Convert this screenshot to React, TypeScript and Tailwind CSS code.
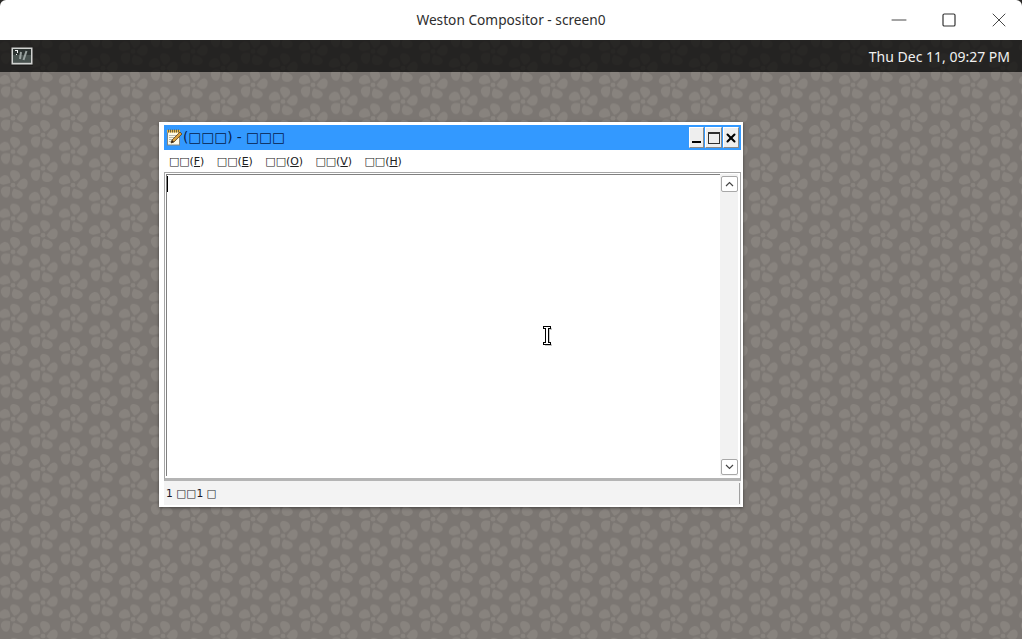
import { Minus, Square, X } from 'lucide-react'

// Weston's wallpaper tile: two staggered flowers
function Flower({ x, y }: { x: number; y: number }) {
  const angles = [0, 72, 144, 216, 288]
  return (
    <g transform={`translate(${x} ${y})`}>
      {angles.map((a) => (
        <path
          key={a}
          transform={`rotate(${a + 18})`}
          d="M0 -3.5 C-1 -5 -6.5 -7 -6.5 -11.5 C-6 -15 -1 -15.5 2 -13.5 C5.5 -11 4.5 -6.5 0 -3.5 Z"
        />
      ))}
      <circle r="2.4" />
    </g>
  )
}

function Wallpaper() {
  return (
    <svg className="absolute inset-0 w-full h-full" aria-hidden>
      <defs>
        <pattern id="tile" width="60" height="33.4" patternUnits="userSpaceOnUse" x="13" y="3.5">
          <g fill="#88837e">
            <Flower x={0} y={8} />
            <Flower x={60} y={8} />
            <Flower x={0} y={41.4} />
            <Flower x={60} y={41.4} />
            <Flower x={30} y={24.7} />
            <Flower x={30} y={-8.7} />
          </g>
        </pattern>
      </defs>
      <rect width="100%" height="100%" fill="#7b7672" />
      <rect width="100%" height="100%" fill="url(#tile)" />
    </svg>
  )
}

function TerminalIcon() {
  return (
    <svg width="22" height="19" viewBox="0 0 22 19" aria-hidden>
      <rect x="0.5" y="0.5" width="21" height="17" fill="#d0d2d0" />
      <rect x="2" y="2" width="18" height="13.5" fill="#2c3331" />
      <rect x="2" y="8" width="18" height="7.5" fill="#47514e" />
      <path d="M4 3 h3 v1 h-3 z M6 4 h1 v2 h-1 z M5 7 h1 v1 h-1 z" fill="#f0f0f0" />
      <path d="M9 12 L10 5 M12.5 13 L15.5 4" stroke="#9aa3a0" strokeWidth="2" />
      <rect x="0" y="18" width="22" height="1" fill="#1c1b1a" />
    </svg>
  )
}

function NotepadIcon() {
  return (
    <svg width="17" height="17" viewBox="0 0 17 17" aria-hidden>
      <rect x="1.5" y="2.5" width="12" height="13.5" fill="#fffbe8" stroke="#85857c" />
      <rect x="1" y="1" width="13" height="2.5" fill="#e8b84a" />
      <path d="M2.5 0.5 v3 M4.5 0.5 v3 M6.5 0.5 v3 M8.5 0.5 v3 M10.5 0.5 v3 M12.5 0.5 v3" stroke="#6f6240" />
      <path d="M3 6.5 h9 M3 8.5 h6 M3 10.5 h5 M3 12.5 h3" stroke="#b8b8b0" />
      <path d="M5 14 L6 11 L14 3 L16 5 L8 13 Z" fill="#d8a040" stroke="#5a4020" strokeWidth="0.8" />
      <path d="M5 14 L6 11 L8 13 Z" fill="#302010" />
    </svg>
  )
}

function CaptionButton({ w, children }: { w: string; children: React.ReactNode }) {
  return (
    <div className={`${w} h-[21px] bg-[#eeeeee] border border-t-white border-l-white border-r-[#8a8a8a] border-b-[#8a8a8a] flex items-center justify-center`}>
      {children}
    </div>
  )
}

function ScrollButton({ up }: { up?: boolean }) {
  return (
    <div className="w-[17px] h-[16px] bg-white border border-[#a8a8a8] rounded-[2px] flex items-center justify-center">
      <svg width="9" height="6" viewBox="0 0 9 6" aria-hidden>
        <path
          d={up ? 'M1 5 L4.5 1.5 L8 5' : 'M1 1 L4.5 4.5 L8 1'}
          fill="none"
          stroke="#444444"
          strokeWidth="1.2"
        />
      </svg>
    </div>
  )
}

const MENUS = ['F', 'E', 'O', 'V', 'H']

function NotepadWindow() {
  return (
    <div className="absolute left-[159px] top-[82px] w-[584px] h-[385px] bg-white shadow-[0_1px_3px_rgba(0,0,0,0.45)] pl-[5px] pr-[2px] pt-[3px] pb-[2px] flex flex-col font-['DejaVu_Sans',sans-serif] text-black">
      <div className="h-[25px] bg-[#3399ff] flex items-center pl-[2px] pr-[2px] shrink-0">
        <NotepadIcon />
        <span className="text-[13.7px] leading-none text-[#06204a] whitespace-pre">(□□□) - □□□</span>
        <div className="ml-auto flex gap-[1px]">
          <CaptionButton w="w-[15px]">
            <div className="w-[9px] h-[2px] bg-black mt-[8px]" />
          </CaptionButton>
          <CaptionButton w="w-[17px]">
            <div className="w-[12px] h-[12px] border border-[#303030] border-t-2" />
          </CaptionButton>
          <CaptionButton w="w-[16px]">
            <X size={16} strokeWidth={3.5} color="#000000" />
          </CaptionButton>
        </div>
      </div>

      <div className="h-[22px] flex items-center pl-[5px] pt-[2px] gap-[12.5px] text-[10.9px] shrink-0 text-[#202020]">
        {MENUS.map((m) => (
          <span key={m} className="whitespace-pre">
            □□(<span className="underline">{m}</span>)
          </span>
        ))}
      </div>

      <div className="flex-1 min-h-0 border border-b-[3px] border-[#a6a6a6] border-b-[#b4b4b4] bg-white p-px pb-[2px] flex">
        <div className="flex-1 border-l border-t border-[#808080] relative pl-0">
          <div className="absolute left-0 top-[1px] w-px h-[16px] bg-black" />
        </div>
        <div className="w-[18px] mr-px bg-[#f2f2f2] flex flex-col justify-between items-center pt-[2px] pb-[1px]">
          <ScrollButton up />
          <ScrollButton />
        </div>
      </div>

      <div className="h-[24px] bg-[#f3f3f3] flex items-center pl-[2px] pr-px pt-[3px] shrink-0">
        <span className="text-[10.7px] whitespace-pre text-[#1a1a2a]">1 □□1 □</span>
        <div className="ml-auto w-px h-[21px] bg-[#a0a0a0] -mt-[3px]" />
      </div>
    </div>
  )
}

export default function App() {
  return (
    <div className="w-[1022px] h-[639px] flex flex-col overflow-hidden bg-[#2a2927] font-['Noto_Sans',sans-serif]">
      <div className="h-10 bg-white rounded-t-[6px] flex items-center relative shrink-0">
        <div className="flex-1 text-center text-[13.7px] text-[#2e2e2e]">
          Weston Compositor - screen0
        </div>
        <div className="absolute -right-[2px] top-0 h-10 flex items-center text-[#333333]">
          <div className="w-[50px] flex justify-center">
            <Minus size={24} strokeWidth={0.9} />
          </div>
          <div className="w-[50px] flex justify-center">
            <Square size={16} strokeWidth={1.2} absoluteStrokeWidth />
          </div>
          <div className="w-[50px] flex justify-center">
            <X size={24} strokeWidth={0.9} />
          </div>
        </div>
      </div>

      <div className="flex-1 relative">
        <Wallpaper />
        <div className="relative h-8 bg-[#000000]/70 flex items-center justify-between pl-[11px] pr-[12px] text-[14px] text-[#f0f0f0]">
          <TerminalIcon />
          <span>Thu Dec 11, 09:27 PM</span>
        </div>
        <NotepadWindow />
        <svg className="absolute left-[541px] top-[285px]" width="13" height="22" viewBox="0 0 13 22" shapeRendering="crispEdges" aria-hidden>
          <path d="M3.5 2.5 H10.5 V4.5 H8.5 V18.5 H10.5 V20.5 H3.5 V18.5 H5.5 V4.5 H3.5 Z" fill="#c8c8c8" />
          <path
            d="M2.5 1.5 H9.5 V3.5 H7.5 V17.5 H9.5 V19.5 H2.5 V17.5 H4.5 V3.5 H2.5 Z"
            fill="#ffffff"
            stroke="#000000"
            strokeWidth="1"
          />
        </svg>
      </div>
    </div>
  )
}
